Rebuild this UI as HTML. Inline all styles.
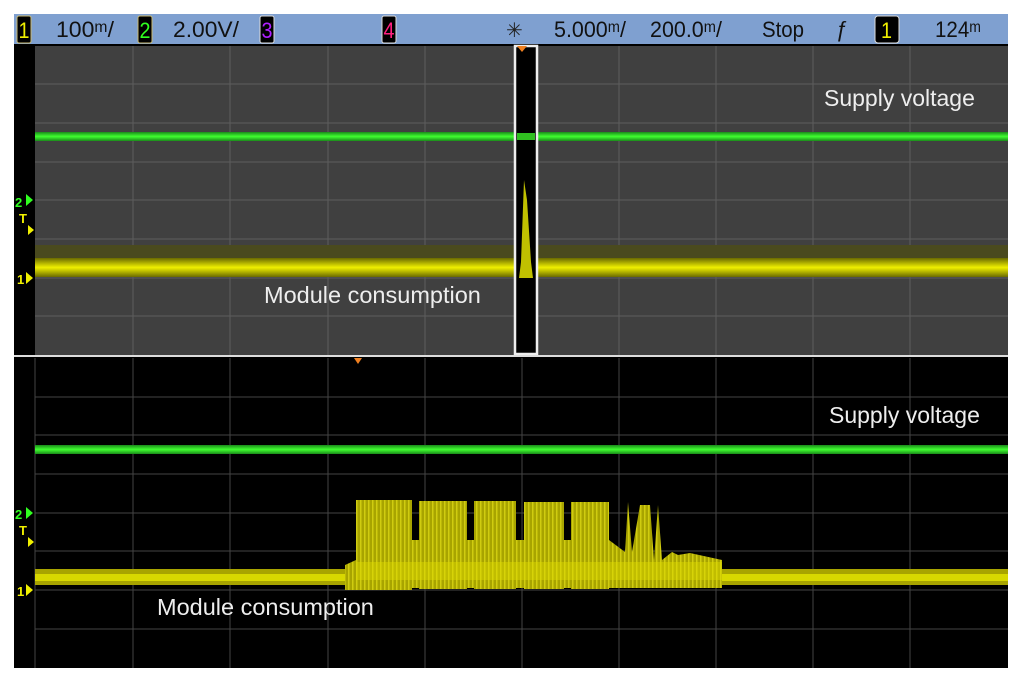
<!DOCTYPE html>
<html><head><meta charset="utf-8"><style>
body{margin:0;background:#fff;width:1024px;height:683px;overflow:hidden;font-family:"Liberation Sans",sans-serif}
svg{display:block}
</style></head><body>
<svg width="1024" height="683" xmlns="http://www.w3.org/2000/svg">
<defs>
<linearGradient id="yl" x1="0" y1="0" x2="0" y2="1">
<stop offset="0" stop-color="#6a6a00"/><stop offset="0.5" stop-color="#f0f000"/><stop offset="1" stop-color="#6a6a00"/>
</linearGradient>
<linearGradient id="gr" x1="0" y1="0" x2="0" y2="1">
<stop offset="0" stop-color="#1a8a1a"/><stop offset="0.5" stop-color="#40ff30"/><stop offset="1" stop-color="#1a8a1a"/>
</linearGradient>
<pattern id="st" width="4" height="10" patternUnits="userSpaceOnUse">
<rect width="4" height="10" fill="#a8a400"/><rect width="1.5" height="10" fill="#d0cc10"/>
</pattern>
</defs>
<rect x="14" y="14" width="994" height="654" fill="#000"/>
<rect x="14" y="14" width="994" height="30" fill="#7fa0d0"/>
<g font-family="Liberation Sans, sans-serif" font-size="22" fill="#111">
<rect x="17" y="16" width="14" height="27" rx="2" fill="#000" stroke="#c9b970"/><text x="18.5" y="38" fill="#f0f000" textLength="11" lengthAdjust="spacingAndGlyphs">1</text>
<text x="56" y="37" textLength="58" lengthAdjust="spacingAndGlyphs">100ᵐ/</text>
<rect x="138" y="16" width="14" height="27" rx="2" fill="#000" stroke="#c9b970"/><text x="139.5" y="38" fill="#30ff20" textLength="11" lengthAdjust="spacingAndGlyphs">2</text>
<text x="173" y="37" textLength="66" lengthAdjust="spacingAndGlyphs">2.00V/</text>
<rect x="260" y="16" width="14" height="27" rx="2" fill="#000" stroke="#ddd"/><text x="261.5" y="38" fill="#b020ff" textLength="11" lengthAdjust="spacingAndGlyphs">3</text>
<rect x="382" y="16" width="14" height="27" rx="2" fill="#000" stroke="#ddd"/><text x="383.5" y="38" fill="#ff2080" textLength="11" lengthAdjust="spacingAndGlyphs">4</text>
<text x="506" y="37" font-size="20" fill="#222">✳</text>
<text x="554" y="37" textLength="72" lengthAdjust="spacingAndGlyphs">5.000ᵐ/</text>
<text x="650" y="37" textLength="72" lengthAdjust="spacingAndGlyphs">200.0ᵐ/</text>
<text x="762" y="37" textLength="42" lengthAdjust="spacingAndGlyphs">Stop</text>
<text x="836" y="37">ƒ</text>
<rect x="875" y="16" width="24" height="27" rx="3" fill="#000" stroke="#ddd"/><text x="881" y="38" fill="#f0f000" textLength="11" lengthAdjust="spacingAndGlyphs">1</text>
<text x="935" y="37" textLength="46" lengthAdjust="spacingAndGlyphs">124ᵐ</text>
</g>
<rect x="35" y="46" width="973" height="309" fill="#404040"/>
<g stroke="#5e5e5e" stroke-width="1">
<line x1="133" y1="46" x2="133" y2="355"/><line x1="230" y1="46" x2="230" y2="355"/><line x1="328" y1="46" x2="328" y2="355"/><line x1="425" y1="46" x2="425" y2="355"/><line x1="522" y1="46" x2="522" y2="355"/><line x1="619" y1="46" x2="619" y2="355"/><line x1="716" y1="46" x2="716" y2="355"/><line x1="813" y1="46" x2="813" y2="355"/><line x1="910" y1="46" x2="910" y2="355"/>
<line x1="35" y1="84" x2="1008" y2="84"/><line x1="35" y1="123" x2="1008" y2="123"/><line x1="35" y1="162" x2="1008" y2="162"/><line x1="35" y1="200" x2="1008" y2="200"/><line x1="35" y1="239" x2="1008" y2="239"/><line x1="35" y1="278" x2="1008" y2="278"/><line x1="35" y1="316" x2="1008" y2="316"/>
</g>
<rect x="35" y="245" width="973" height="14" fill="#4a4a1e"/>
<rect x="35" y="258" width="973" height="19" fill="url(#yl)"/>
<rect x="35" y="132" width="973" height="9" fill="url(#gr)"/>
<rect x="515" y="46" width="22" height="308" fill="#000" stroke="#eee" stroke-width="2.5"/>
<path d="M524 180 L527 200 L531 262 L533 278 L519 278 L521 262 Z" fill="#c0c000"/>
<rect x="517" y="133" width="18" height="7" fill="#30c020"/>
<path d="M517 46 L527 46 L522 52 Z" fill="#f08020"/>
<text x="824" y="106" font-size="23" fill="#eee">Supply voltage</text>
<text x="264" y="303" font-size="23.5" fill="#eee">Module consumption</text>
<line x1="14" y1="356" x2="1008" y2="356" stroke="#ddd" stroke-width="2"/>
<g stroke="#444" stroke-width="1">
<line x1="133" y1="358" x2="133" y2="668"/><line x1="230" y1="358" x2="230" y2="668"/><line x1="328" y1="358" x2="328" y2="668"/><line x1="425" y1="358" x2="425" y2="668"/><line x1="522" y1="358" x2="522" y2="668"/><line x1="619" y1="358" x2="619" y2="668"/><line x1="716" y1="358" x2="716" y2="668"/><line x1="813" y1="358" x2="813" y2="668"/><line x1="910" y1="358" x2="910" y2="668"/>
<line x1="35" y1="397" x2="1008" y2="397"/><line x1="35" y1="435" x2="1008" y2="435"/><line x1="35" y1="474" x2="1008" y2="474"/><line x1="35" y1="513" x2="1008" y2="513"/><line x1="35" y1="551" x2="1008" y2="551"/><line x1="35" y1="590" x2="1008" y2="590"/><line x1="35" y1="629" x2="1008" y2="629"/>
</g>
<line x1="35" y1="358" x2="35" y2="668" stroke="#444"/>
<path d="M354 358 L362 358 L358 364 Z" fill="#f08020"/>
<rect x="35" y="445" width="973" height="9" fill="url(#gr)"/>
<rect x="35" y="569" width="973" height="16" fill="#a8a400"/>
<rect x="35" y="574" width="973" height="7" fill="#d8d800"/>
<g fill="url(#st)">
<path d="M345 565 L356 560 L356 500 L412 500 L412 590 L345 590 Z"/>
<rect x="412" y="540" width="8" height="48"/>
<rect x="419" y="501" width="48" height="88"/>
<rect x="466" y="540" width="8" height="48"/>
<rect x="474" y="501" width="42" height="88"/>
<rect x="516" y="540" width="8" height="48"/>
<rect x="524" y="502" width="40" height="87"/>
<rect x="564" y="540" width="7" height="48"/>
<rect x="571" y="502" width="38" height="87"/>
<path d="M609 540 L625 552 L628 502 L632 552 L640 505 L650 505 L654 560 L658 505 L662 560 L672 552 L678 555 L690 553 L722 560 L722 588 L609 588 Z"/>
</g>
<rect x="356" y="562" width="366" height="18" fill="#e0dc00" opacity="0.45"/>
<text x="829" y="423" font-size="23" fill="#eee">Supply voltage</text>
<text x="157" y="615" font-size="23.5" fill="#eee">Module consumption</text>
<g font-size="13" font-weight="bold">
<text x="15" y="207" fill="#30ff20">2</text><path d="M26 194 L33 200 L26 206 Z" fill="#30ff20"/>
<text x="19" y="223" fill="#f0f000">T</text><path d="M28 225 L34 230 L28 235 Z" fill="#f0f000"/>
<text x="17" y="284" fill="#f0f000">1</text><path d="M26 272 L33 278 L26 284 Z" fill="#f0f000"/>
<text x="15" y="519" fill="#30ff20">2</text><path d="M26 507 L33 513 L26 519 Z" fill="#30ff20"/>
<text x="19" y="535" fill="#f0f000">T</text><path d="M28 537 L34 542 L28 547 Z" fill="#f0f000"/>
<text x="17" y="596" fill="#f0f000">1</text><path d="M26 584 L33 590 L26 596 Z" fill="#f0f000"/>
</g>
</svg>
</body></html>
